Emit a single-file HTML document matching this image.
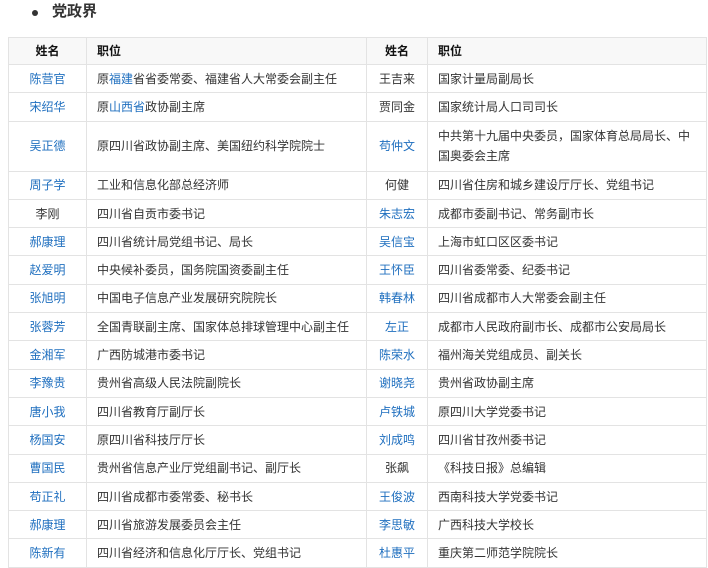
<!DOCTYPE html>
<html><head><meta charset="utf-8"><style>
body{margin:0;background:#fff;font-family:"Liberation Sans","Noto Sans CJK SC",sans-serif;color:#333;}
.t{position:absolute;left:52px;top:2px;font-size:15px;font-weight:bold;color:#333;line-height:20px}
.b{position:absolute;left:32px;top:10px;width:6px;height:6px;border-radius:50%;background:#333}
table{position:absolute;left:8px;top:37px;border-collapse:collapse;table-layout:fixed;width:698px;font-size:12px}
td,th{border:1px solid #e3e3e3;height:27.3px;padding:0 10px;line-height:20px;overflow:hidden;white-space:nowrap}
th{background:#f8f8f8;font-weight:bold;color:#111;text-align:left;height:26px}
th.n{text-align:center}
td.n{text-align:center;padding:0}
a{color:#1f6fbf;text-decoration:none}
tr.tall td{height:49px}
</style></head><body>
<div class="b"></div><div class="t">党政界</div>
<table>
<colgroup><col style="width:78px"><col style="width:280px"><col style="width:61px"><col style="width:279px"></colgroup>
<tr><th class="n">姓名</th><th>职位</th><th class="n">姓名</th><th>职位</th></tr>
<tr><td class="n"><a>陈营官</a></td><td>原<a>福建</a>省省委常委、福建省人大常委会副主任</td><td class="n">王吉来</td><td>国家计量局副局长</td></tr>
<tr><td class="n"><a>宋绍华</a></td><td>原<a>山西省</a>政协副主席</td><td class="n">贾同金</td><td>国家统计局人口司司长</td></tr>
<tr class="tall"><td class="n"><a>吴正德</a></td><td>原四川省政协副主席、美国纽约科学院院士</td><td class="n"><a>苟仲文</a></td><td>中共第十九届中央委员，国家体育总局局长、中<br>国奥委会主席</td></tr>
<tr><td class="n"><a>周子学</a></td><td>工业和信息化部总经济师</td><td class="n">何健</td><td>四川省住房和城乡建设厅厅长、党组书记</td></tr>
<tr><td class="n">李刚</td><td>四川省自贡市委书记</td><td class="n"><a>朱志宏</a></td><td>成都市委副书记、常务副市长</td></tr>
<tr><td class="n"><a>郝康理</a></td><td>四川省统计局党组书记、局长</td><td class="n"><a>吴信宝</a></td><td>上海市虹口区区委书记</td></tr>
<tr><td class="n"><a>赵爱明</a></td><td>中央候补委员，国务院国资委副主任</td><td class="n"><a>王怀臣</a></td><td>四川省委常委、纪委书记</td></tr>
<tr><td class="n"><a>张旭明</a></td><td>中国电子信息产业发展研究院院长</td><td class="n"><a>韩春林</a></td><td>四川省成都市人大常委会副主任</td></tr>
<tr><td class="n"><a>张蓉芳</a></td><td>全国青联副主席、国家体总排球管理中心副主任</td><td class="n"><a>左正</a></td><td>成都市人民政府副市长、成都市公安局局长</td></tr>
<tr><td class="n"><a>金湘军</a></td><td>广西防城港市委书记</td><td class="n"><a>陈荣水</a></td><td>福州海关党组成员、副关长</td></tr>
<tr><td class="n"><a>李豫贵</a></td><td>贵州省高级人民法院副院长</td><td class="n"><a>谢晓尧</a></td><td>贵州省政协副主席</td></tr>
<tr><td class="n"><a>唐小我</a></td><td>四川省教育厅副厅长</td><td class="n"><a>卢铁城</a></td><td>原四川大学党委书记</td></tr>
<tr><td class="n"><a>杨国安</a></td><td>原四川省科技厅厅长</td><td class="n"><a>刘成鸣</a></td><td>四川省甘孜州委书记</td></tr>
<tr><td class="n"><a>曹国民</a></td><td>贵州省信息产业厅党组副书记、副厅长</td><td class="n">张飙</td><td>《科技日报》总编辑</td></tr>
<tr><td class="n"><a>苟正礼</a></td><td>四川省成都市委常委、秘书长</td><td class="n"><a>王俊波</a></td><td>西南科技大学党委书记</td></tr>
<tr><td class="n"><a>郝康理</a></td><td>四川省旅游发展委员会主任</td><td class="n"><a>李思敏</a></td><td>广西科技大学校长</td></tr>
<tr><td class="n"><a>陈新有</a></td><td>四川省经济和信息化厅厅长、党组书记</td><td class="n"><a>杜惠平</a></td><td>重庆第二师范学院院长</td></tr>
</table>
</body></html>
